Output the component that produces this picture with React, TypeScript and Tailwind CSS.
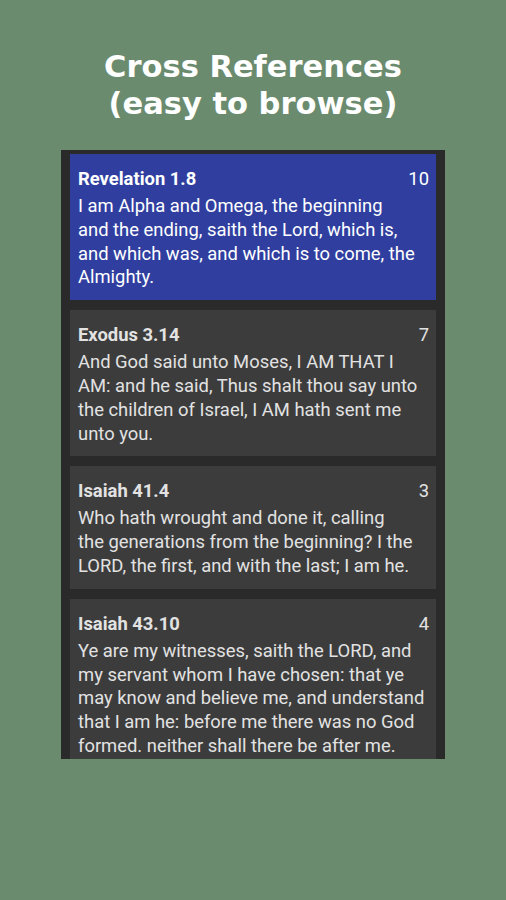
import React from 'react';

interface Reference {
    ref: string;
    count: number;
    lines: string[];
    selected?: boolean;
}

const references: Reference[] = [
    {
        ref: 'Revelation 1.8',
        count: 10,
        lines: [
            'I am Alpha and Omega, the beginning',
            'and the ending, saith the Lord, which is,',
            'and which was, and which is to come, the',
            'Almighty.'
        ],
        selected: true
    },
    {
        ref: 'Exodus 3.14',
        count: 7,
        lines: [
            'And God said unto Moses, I AM THAT I',
            'AM: and he said, Thus shalt thou say unto',
            'the children of Israel, I AM hath sent me',
            'unto you.'
        ]
    },
    {
        ref: 'Isaiah 41.4',
        count: 3,
        lines: [
            'Who hath wrought and done it, calling',
            'the generations from the beginning? I the',
            'LORD, the first, and with the last; I am he.'
        ]
    },
    {
        ref: 'Isaiah 43.10',
        count: 4,
        lines: [
            'Ye are my witnesses, saith the LORD, and',
            'my servant whom I have chosen: that ye',
            'may know and believe me, and understand',
            'that I am he: before me there was no God',
            'formed. neither shall there be after me.'
        ]
    }
];

const RefCard: React.FC<{ item: Reference }> = ({ item }) => {
    return (
        <div
            className={`shrink-0 pl-[8px] pr-[7px] pt-[13px] pb-[11px] ${item.selected ? 'bg-[#303f9f] text-white' : 'bg-[#3c3c3c] text-[#e2e2e2]'}`}
        >
            <div className="flex items-center justify-between mb-[3px]">
                <span className="text-[18.4px] font-bold leading-[24px]">{item.ref}</span>
                <span className="text-[18.4px] leading-[24px]">{item.count}</span>
            </div>
            <div className="text-[18.4px] leading-[23.8px]">
                {item.lines.map((line, i) => (
                    <div key={i} className="whitespace-nowrap">{line}</div>
                ))}
            </div>
        </div>
    );
};

export default function App() {
    return (
        <div className="min-h-screen w-full bg-[#6b8b6f] flex flex-col items-center" style={{ fontFamily: 'Roboto, "Noto Sans", sans-serif' }}>
            <h1
                className="pt-[48px] text-center text-white font-bold text-[30.5px] leading-[37px]"
                style={{ fontFamily: '"DejaVu Sans", Verdana, sans-serif' }}
            >
                Cross References
                <br />
                (easy to browse)
            </h1>
            <div className="mt-[28px] w-[384px] h-[609px] bg-[#2a2a2a] overflow-hidden px-[9px] pt-[4px] flex flex-col gap-[10px]">
                {references.map(item => (
                    <RefCard key={item.ref} item={item} />
                ))}
            </div>
        </div>
    );
}
